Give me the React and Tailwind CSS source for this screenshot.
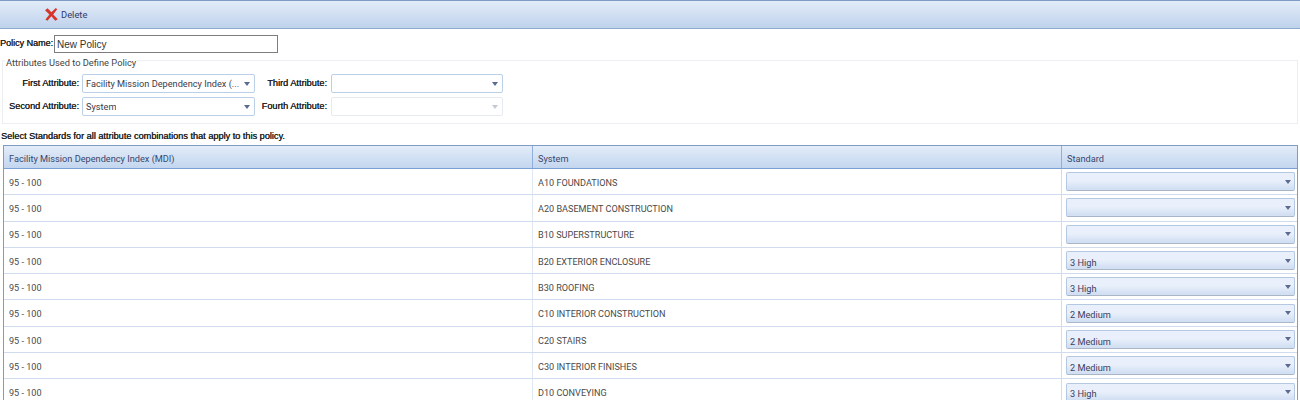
import React from "react";

const rows = [
  ["A10 FOUNDATIONS", ""],
  ["A20 BASEMENT CONSTRUCTION", ""],
  ["B10 SUPERSTRUCTURE", ""],
  ["B20 EXTERIOR ENCLOSURE", "3 High"],
  ["B30 ROOFING", "3 High"],
  ["C10 INTERIOR CONSTRUCTION", "2 Medium"],
  ["C20 STAIRS", "2 Medium"],
  ["C30 INTERIOR FINISHES", "2 Medium"],
  ["D10 CONVEYING", "3 High"],
];

function Arrow({ className }) {
  return (
    <svg width="6" height="4" viewBox="0 0 6 4" className={className}>
      <path d="M0 0h6L3 4z" fill="currentColor" />
    </svg>
  );
}

function AttrSelect({ value, disabled, className }) {
  return (
    <div
      className={`flex h-[19px] items-center justify-between rounded-[2px] border bg-white pl-[3px] pr-[4px] text-[9.2px] text-[#3b3b4a] ${
        disabled ? "border-[#e6ebf3]" : "border-[#bccfe8]"
      } ${className}`}
    >
      <span className="truncate pt-[1px]">{value}</span>
      <Arrow className={disabled ? "text-[#c5c9d2]" : "text-[#5a6b8f]"} />
    </div>
  );
}

function Attr({ label, labelWidth, children }) {
  return (
    <div className="flex items-center">
      <span
        className={`${labelWidth} pt-[1px] text-right font-['Liberation_Sans',sans-serif] text-[9.2px] text-[#222] [text-shadow:0.2px_0_0_#222]`}
      >
        {label}
      </span>
      {children}
    </div>
  );
}

function StandardSelect({ value }) {
  return (
    <div className="flex h-[19px] items-center justify-between rounded-[2px] border border-[#b4c8e2] border-b-[#a9b6c8] bg-gradient-to-b from-[#e9f0fb] from-45% to-[#d3e0f3] to-90% pl-[3px] pr-[3px] text-[9.2px] text-[#3a4060]">
      <span className="pt-[4px]">{value}</span>
      <Arrow className="text-[#5a6b8f]" />
    </div>
  );
}

export default function App() {
  return (
    <div className="h-[400px] w-[1300px] overflow-hidden bg-white font-['Roboto',sans-serif]">
      <div className="flex h-[29px] items-center border-y border-t-[#7f9dc4] border-b-[#8da9cd] bg-gradient-to-b from-[#e3ecf8] to-[#bfd2ec] pl-[45px]">
        <svg width="13" height="13" viewBox="0 0 13 13">
          <path d="M0 2.2L2.6.2l3.8 4L10.8 0l1.4 1.2-4 5.2 4.6 4.8-2.6 1.6-3.8-4.6-4 4.6L.4 11.4l4-5z" fill="#d8352a" />
        </svg>
        <span className="ml-[3px] pt-[2px] text-[9.4px] text-[#2f3a6b]">Delete</span>
      </div>

      <div className="mt-[6px] flex h-[18px] items-center">
        <span className="w-[53px] font-['Liberation_Sans',sans-serif] text-[9px] text-[#222] [text-shadow:0.3px_0_0_#222]">
          Policy Name:
        </span>
        <div className="ml-[1px] flex h-[18px] w-[224px] items-center border border-[#7d7d7d] pl-[2px] font-['Liberation_Sans',sans-serif] text-[10px] text-[#333]">
          New Policy
        </div>
      </div>

      <div className="relative mx-[2px] mt-[7px] h-[64px] w-[1296px] border border-[#eceef2] pl-[1px] pt-[13px]">
        <span className="absolute left-[2px] top-[-5px] bg-white px-[1px] text-[9.3px] leading-[13px] text-[#444]">
          Attributes Used to Define Policy
        </span>
        <div className="flex flex-col gap-[4px]">
          <div className="flex">
            <Attr label="First Attribute:" labelWidth="w-[78px] pr-[3px]">
              <AttrSelect value="Facility Mission Dependency Index (..." className="w-[173px]" />
            </Attr>
            <Attr label="Third Attribute:" labelWidth="w-[76px] pr-[4px]">
              <AttrSelect value="" className="w-[172px]" />
            </Attr>
          </div>
          <div className="flex">
            <Attr label="Second Attribute:" labelWidth="w-[78px] pr-[3px]">
              <AttrSelect value="System" className="w-[173px]" />
            </Attr>
            <Attr label="Fourth Attribute:" labelWidth="w-[76px] pr-[4px]">
              <AttrSelect value="" disabled className="w-[172px]" />
            </Attr>
          </div>
        </div>
      </div>

      <div className="mt-[5px] h-[14px] pl-[1px] font-['Liberation_Sans',sans-serif] text-[9.16px] leading-[14px] text-[#222] [text-shadow:0.3px_0_0_#222]">
        Select Standards for all attribute combinations that apply to this policy.
      </div>

      <div className="ml-[3px] mt-[2px] w-[1295px] border-x border-t border-[#7f9dc4]">
        <div className="grid h-[23px] grid-cols-[528px_529px_1fr] items-center border-b border-[#7aa0d6] bg-gradient-to-b from-[#e3ecf8] to-[#c3d6ef] text-[9.2px] text-[#37476f]">
          <div className="flex h-full items-center pl-[5px] pt-[3px]">Facility Mission Dependency Index (MDI)</div>
          <div className="flex h-full items-center border-l border-[#8fb0dc] pl-[5px] pt-[3px]">System</div>
          <div className="flex h-full items-center border-l border-[#8fb0dc] pl-[5px] pt-[3px]">Standard</div>
        </div>
        {rows.map(([system, standard]) => (
          <div
            key={system}
            className="grid h-[26.3px] grid-cols-[528px_529px_1fr] items-center border-b border-[#d0dcee] text-[9.1px] text-[#4a4a4a]"
          >
            <div className="flex h-full items-center pl-[5px] pt-[4px]">95 - 100</div>
            <div className="flex h-full items-center border-l border-[#e1e7f1] pl-[5px] pt-[4px]">{system}</div>
            <div className="flex h-full items-center border-l border-[#d0dcee] pl-[4px] pr-[2px]">
              <div className="w-full">
                <StandardSelect value={standard} />
              </div>
            </div>
          </div>
        ))}
      </div>
    </div>
  );
}
